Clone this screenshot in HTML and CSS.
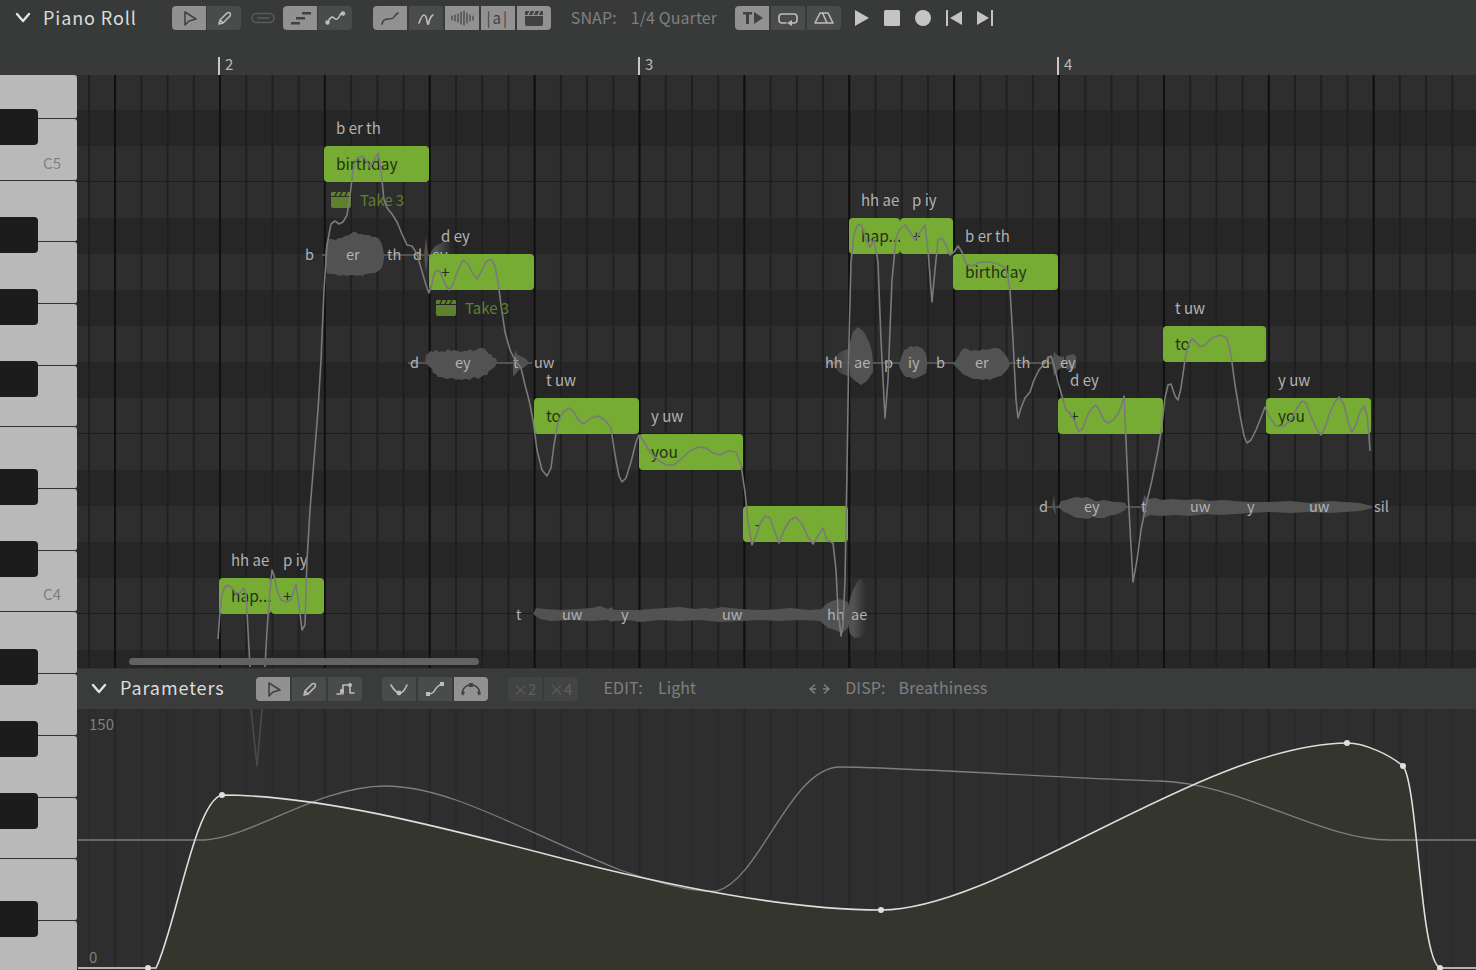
FILE: index.html
```html
<!DOCTYPE html>
<html>
<head>
  <meta charset="UTF-8">
  <title>Piano Roll</title>
  <link rel="stylesheet" href="styles.css">
</head>
<body>
  <div class="topbar">
    <div class="toolbar">
      <svg class="chevron" width="16" height="12" viewBox="0 0 16 12"><path d="M2 2l6 7 6-7"/></svg>
      <span class="panel-title">Piano Roll</span>

      <div class="group tight g-edit">
        <button class="btn on"><svg viewBox="0 0 34 24"><path class="st" d="M13 6v13l4-4 7-2z"/></svg></button>
        <button class="btn"><svg viewBox="0 0 34 24"><path class="st" d="M12 18l1-4 7-7q2-1 3 0t0 3l-7 7zM13 14l3 3"/></svg></button>
      </div>
      <svg class="link-icon" width="24" height="12" viewBox="0 0 24 12"><rect x="1" y="1.500" width="22" height="9" rx="4.500"/><path d="M6 6h12"/></svg>
      <div class="group tight g-view">
        <button class="btn on"><svg viewBox="0 0 34 24"><path class="fl" d="M8 16h9v2.500H8zM13 11h9v2.500h-9zM19 6h9v2.500h-9z"/></svg></button>
        <button class="btn"><svg viewBox="0 0 34 24"><path class="st" d="M10 16q3-7 6-4t5-1 3-4"/><circle class="fl" cx="9.500" cy="16.500" r="2.200"/><circle class="fl" cx="25" cy="7.500" r="2.200"/></svg></button>
      </div>
      <div class="group g-show">
        <button class="btn on"><svg viewBox="0 0 34 24"><path class="st" d="M9 18q1-5 6-5t6-2 4-4"/></svg></button>
        <button class="btn"><svg viewBox="0 0 34 24"><path class="st" d="M10 17q3-8 5-8t3 6 2 1 4-7"/></svg></button>
        <button class="btn on"><svg viewBox="0 0 34 24"><path class="st thin" d="M7 10v4M10 9v6M13 8v8M16 6v12M19 5v14M22 7v10M25 9v6M28 10v4"/></svg></button>
        <button class="btn on btn-text">|a|</button>
        <button class="btn on"><svg viewBox="0 0 34 24"><path class="fl" d="M8 10h18v8q0 2-2 2H10q-2 0-2-2zM8 9V6q0-1 1-1h16q1 0 1 1v3z"/><path class="cut" d="M11 9l2-4M16 9l2-4M21 9l2-4"/></svg></button>
      </div>

      <span class="hint hint-snap">SNAP:</span>
      <span class="hint hint-value">1/4 Quarter</span>

      <div class="group g-play">
        <button class="btn on"><svg viewBox="0 0 34 24"><path class="fl" d="M8 6h9v2.500h-3V18h-3V8.500H8zM19 6l9 6-9 6z"/></svg></button>
        <button class="btn"><svg viewBox="0 0 34 24"><path class="st" d="M15 17h-4q-3 0-3-3v-3q0-3 3-3h12q3 0 3 3v3q0 3-3 3h-2"/><path class="fl" d="M21 14v6l-5-3z"/></svg></button>
        <button class="btn"><svg viewBox="0 0 34 24"><path class="st" d="M13 7h8l5 10H8zM16 8l4 9"/></svg></button>
      </div>

      <div class="transport">
        <svg width="14" height="16" viewBox="0 0 14 16"><path d="M0 0l14 8-14 8z"/></svg>
        <svg width="16" height="16" viewBox="0 0 16 16"><rect width="16" height="16" rx="1.500"/></svg>
        <svg width="16" height="16" viewBox="0 0 16 16"><circle cx="8" cy="8" r="8"/></svg>
        <svg width="16" height="16" viewBox="0 0 16 16"><path d="M0 0h2v16H0zM16 1v14L4 8z"/></svg>
        <svg width="16" height="16" viewBox="0 0 16 16"><path d="M14 0h2v16h-2zM0 1v14l12-7z"/></svg>
      </div>
    </div>
    <div class="ruler">
      <span class="bar-mark mark-2">2</span>
      <span class="bar-mark mark-3">3</span>
      <span class="bar-mark mark-4">4</span>
    </div>
  </div>

  <div class="main">
    <div class="piano">
      <div class="white-keys">
        <div class="key first"></div>
        <div class="key">C5</div>
        <div class="key"></div>
        <div class="key"></div>
        <div class="key"></div>
        <div class="key"></div>
        <div class="key"></div>
        <div class="key"></div>
        <div class="key">C4</div>
        <div class="key"></div>
        <div class="key"></div>
        <div class="key"></div>
        <div class="key"></div>
        <div class="key"></div>
        <div class="key"></div>
        <div class="key"></div>
      </div>
      <div class="black-keys">
        <div class="black"></div>
        <div class="black wide"></div>
        <div class="black"></div>
        <div class="black"></div>
        <div class="black wide"></div>
        <div class="black"></div>
        <div class="black wide"></div>
        <div class="black"></div>
        <div class="black"></div>
        <div class="black wide"></div>
      </div>
    </div>

    <div class="editor">
      <div class="roll">
        <!-- waveforms and phonemes sit under the notes -->
        <svg class="layer" viewBox="77 75 1399 593">
          <defs>
            <linearGradient id="fade-in"><stop offset="0" stop-color="#525252" stop-opacity="0"/><stop offset="1" stop-color="#525252"/></linearGradient>
            <linearGradient id="fade-out"><stop offset="0.300" stop-color="#525252"/><stop offset="1" stop-color="#525252" stop-opacity="0"/></linearGradient>
          </defs>
          <g class="wave">
            <path d="M322 254h110v2H322z"/>
            <path d="M325 255L326 245 328 239 332 239 335 240 339 238 342 238 345 236 349 235 353 232 356 232 358 234 362 234 364 235 369 235 372 237 376 237 379 239 381 242 382 245 383 249 384 255 384 259 383 264 381 269 378 271 375 273 371 273 368 274 365 274 363 276 360 275 356 276 354 275 350 275 347 276 343 275 340 276 337 275 334 274 330 274 327 273 326 268 325 262z"/>
            <path d="M424 255l2-18 2 18-2 18z"/>
            <path fill="url(#fade-out)" d="M430 255q3-12 22-15v30q-18-2-22-15z"/>

            <path d="M408 362h124v2H408z"/>
            <path d="M425 363L426 355 428 354 430 351 433 352 436 350 439 352 442 351 445 352 448 349 451 351 454 350 458 351 461 352 464 351 467 351 470 349 473 351 476 350 479 348 482 348 485 349 487 352 489 354 492 355 493 358 496 358 497 361 496 365 494 368 492 369 489 371 487 375 484 375 481 377 478 379 475 377 472 378 470 380 467 379 464 379 462 380 459 379 456 380 453 378 450 378 447 379 444 378 441 377 438 377 436 374 433 373 432 369z"/>
            <path d="M513 363l2-13 2 4 3 2 3 1 3 2 3 4-3 3-3 2-3 1-3 3-2 3-2 1z"/>

            <path d="M533 614L536 608 545 609 560 610 578 609 592 608 600 606 608 609 612 607 614 610 640 610 650 609 665 608 680 607 695 609 705 608 712 609 722 607 740 609 760 610 780 609 790 608 810 610 822 609 826 604 832 601 840 599 848 602 848 628 842 633 835 630 828 628 820 621 800 620 780 621 760 620 740 621 720 622 700 620 680 621 660 620 640 622 628 620 614 621 612 622 608 620 590 621 570 620 550 621 540 619z"/>
            <path fill="url(#fade-out)" d="M848 606L852 592 857 582 862 578 866 590 866 630 861 637 855 638 850 634 848 624z"/>

            <path d="M826 362h250v2H826z"/>
            <path fill="url(#fade-in)" d="M824 363l10-5 6-6 8-3v27l-8-3-6-6z"/>
            <path d="M849 345l4-13 5-5 6 5 5 10 3 10 1 10 0 10-6 9-6 4-7-5-4-4z"/>
            <path d="M900 362l2-7 2-5 3-1 3-3 4 1 3-1 4 2 2 1 3 5 1 6 0 6-1 7-3 2-4 2-3 1-3 1-3-2-4 0-3-3-2-4-2-4z"/>
            <path d="M953 364l3-4 2-3 3-6 3-3 4 1 3 2 4-1 4 1 4-2 3 1 4-1 4-1 4 0 3 2 3 3 3 4 2 4 1 4-3 5-3 3-3 3-4 1-3 1-4 2-4-1-4 1-4-1-4 0-3-1-4-2-4-2-3-3z"/>
            <path d="M1052 363l2-12 2 3 3 2 3 1 2-1v12l-3 0-3 2-2 3-2 3zM1066 356l7-2 3 2v12l-6 2-4-1z"/>

            <path d="M1047 506h325v2H1047z"/>
            <path d="M1052 507l2-12 2 20zM1058 507l3-6 5-1 6-2 5-1 5 1 5-1 4 2 4 2 4 0 5-1 5 1 6 1 4 0 6 1 2 3-2 4-5 3-6 2-6 1-4 2-7 0-4-1-6 2-5-1-5 0-5-2-3-2-5-2z"/>
            <path d="M1142 507L1144 495 1148 499 1155 498 1162 500 1172 499 1185 500 1198 499 1210 501 1222 500 1235 501 1250 502 1270 502 1290 501 1310 503 1330 501 1345 502 1360 503 1372 506 1372 508 1360 511 1345 512 1330 513 1310 512 1290 513 1270 512 1250 513 1235 514 1220 515 1205 514 1190 516 1175 515 1160 516 1150 515 1145 518 1142 510z"/>
          </g>
          <g class="phones">
            <text x="305" y="260">b</text><text x="346" y="260">er</text><text x="387" y="260">th</text><text x="413" y="260">d</text><text x="432" y="260">ey</text>
            <text x="410" y="368">d</text><text x="455" y="368">ey</text><text x="513" y="368">t</text><text x="534" y="368">uw</text>
            <text x="516" y="620">t</text><text x="562" y="620">uw</text><text x="621" y="620">y</text><text x="722" y="620">uw</text><text x="827" y="620">hh</text><text x="851" y="620">ae</text>
            <text x="825" y="368">hh</text><text x="854" y="368">ae</text><text x="884" y="368">p</text><text x="908" y="368">iy</text><text x="936" y="368">b</text><text x="975" y="368">er</text><text x="1016" y="368">th</text><text x="1041" y="368">d</text><text x="1060" y="368">ey</text>
            <text x="1039" y="512">d</text><text x="1084" y="512">ey</text><text x="1141" y="512">t</text><text x="1190" y="512">uw</text><text x="1247" y="512">y</text><text x="1309" y="512">uw</text><text x="1374" y="512">sil</text>
          </g>
        </svg>

        <!-- left/top/width come from each note's time and pitch -->
        <div class="note" style="left:142px;top:503px;width:52px"><span class="phon">hh ae</span><span class="lyric">hap...</span></div>
        <div class="note" style="left:194px;top:503px;width:53px"><span class="phon">p iy</span><span class="lyric">+</span></div>
        <div class="note" style="left:247px;top:71px;width:105px"><span class="phon">b er th</span><span class="lyric">birthday</span>
          <div class="take"><svg width="20" height="17" viewBox="0 0 20 17"><path d="M0 6h20v9q0 2-2 2H2q-2 0-2-2zM0 5V2q0-1 1-1h18q1 0 1 1v3z"/><path class="cut" d="M4 5l2-4M9 5l2-4M14 5l2-4"/></svg><span>Take 3</span></div>
        </div>
        <div class="note" style="left:352px;top:179px;width:105px"><span class="phon">d ey</span><span class="lyric">+</span>
          <div class="take"><svg width="20" height="17" viewBox="0 0 20 17"><path d="M0 6h20v9q0 2-2 2H2q-2 0-2-2zM0 5V2q0-1 1-1h18q1 0 1 1v3z"/><path class="cut" d="M4 5l2-4M9 5l2-4M14 5l2-4"/></svg><span>Take 3</span></div>
        </div>
        <div class="note" style="left:457px;top:323px;width:105px"><span class="phon">t uw</span><span class="lyric">to</span></div>
        <div class="note" style="left:562px;top:359px;width:104px"><span class="phon">y uw</span><span class="lyric">you</span></div>
        <div class="note" style="left:666px;top:431px;width:105px"><span class="lyric">-</span></div>
        <div class="note" style="left:772px;top:143px;width:51px"><span class="phon">hh ae</span><span class="lyric">hap...</span></div>
        <div class="note" style="left:823px;top:143px;width:53px"><span class="phon">p iy</span><span class="lyric">+</span></div>
        <div class="note" style="left:876px;top:179px;width:105px"><span class="phon">b er th</span><span class="lyric">birthday</span></div>
        <div class="note" style="left:981px;top:323px;width:105px"><span class="phon">d ey</span><span class="lyric">+</span></div>
        <div class="note" style="left:1086px;top:251px;width:103px"><span class="phon">t uw</span><span class="lyric">to</span></div>
        <div class="note" style="left:1189px;top:323px;width:105px"><span class="phon">y uw</span><span class="lyric">you</span></div>

        <!-- pitch curve goes over everything -->
        <svg class="layer" viewBox="77 75 1399 593">
          <path class="pitch" d="M218 639L220 612 222 594 225 587 228 585 232 588 236 593 240 593 244 588 246 594 248 630 250 667"/>
          <path class="pitch" d="M265 667L267 630 270 590 272 570 274 575 277 590 281 600 286 602 291 600 296 584 299 605 302 630 305 625 307 560 310 510 314 460 318 410 321 360 324 290 327 245 331 224 335 221 339 224 343 222 347 215 350 196 353 170 357 158 362 156 366 160 370 167 374 160 378 153 381 170 384 200 387 208 392 214 397 222 402 234 407 245 412 246 417 254 421 268 426 285 429 293 432 284 434 274 437 270 440 272 444 282 449 290 453 284 458 270 463 260 468 264 473 274 477 279 481 272 486 262 491 259 495 266 498 282 501 305 505 332 510 350 515 360 521 368 525 385 529 400 533 420 537 450 542 470 547 476 551 468 554 445 558 422 563 412 569 408 574 412 578 420 584 424 591 418 598 416 605 420 611 428 615 455 619 476 622 482 626 478 631 462 636 442 639 435 644 442 650 452 658 460 666 465 674 465 682 458 690 451 698 447 706 448 713 453 720 455 728 451 736 452 741 465 745 492 748 522 752 545 756 536 760 524 765 516 770 518 775 532 779 543 784 530 790 520 796 517 802 524 808 537 813 544 818 536 823 528 827 540 833 543 836 570 838 610 841 636 843 625 845 580 847 470 849 340 851 262 854 234 858 224 862 226 866 240 870 247 874 240 878 262 881 340 885 418 888 380 892 280 896 238 900 229 905 225 910 232 915 240 920 232 925 225 928 250 932 302 935 270 938 240 942 238 946 245 950 255 954 252 958 246 962 252 966 264 972 266 980 262 990 262 998 264 1006 268 1010 290 1013 340 1016 400 1018 418 1021 408 1025 398 1030 392 1034 380 1039 370 1044 364 1048 358 1051 356 1054 366 1058 382 1062 396 1066 410 1070 413 1074 420 1079 432 1083 428 1088 414 1093 407 1096 405 1100 412 1104 420 1108 423 1113 420 1118 414 1122 404 1124 396 1126 440 1129 510 1133 582 1137 560 1141 530 1146 505 1152 480 1158 450 1162 425 1165 398 1168 385 1171 384 1175 396 1178 400 1181 388 1185 360 1188 345 1192 339 1196 342 1200 347 1205 345 1212 338 1220 335 1227 338 1231 355 1235 385 1240 415 1244 436 1247 443 1251 440 1256 430 1262 415 1265 407 1270 418 1276 426 1284 426 1291 420 1297 408 1302 401 1306 403 1310 414 1316 428 1321 435 1325 428 1330 412 1335 402 1339 397 1344 405 1349 425 1352 432 1356 425 1360 412 1364 406 1367 415 1369 435 1370 451"/>
        </svg>
        <div class="scrollbar"></div>
      </div>

      <div class="params-bar">
        <svg class="chevron" width="16" height="12" viewBox="0 0 16 12"><path d="M2 2l6 7 6-7"/></svg>
        <span class="panel-title">Parameters</span>

        <div class="group g-ptool">
          <button class="btn on"><svg viewBox="0 0 34 24"><path class="st" d="M13 6v13l4-4 7-2z"/></svg></button>
          <button class="btn"><svg viewBox="0 0 34 24"><path class="st" d="M12 18l1-4 7-7q2-1 3 0t0 3l-7 7zM13 14l3 3"/></svg></button>
          <button class="btn"><svg viewBox="0 0 34 24"><path class="st" d="M9 17h4v-4h2v4M15 13V8h7v8h4"/><circle class="fl" cx="14" cy="14" r="2"/><circle class="fl" cx="22" cy="8" r="2"/></svg></button>
        </div>
        <div class="group g-pcurve">
          <button class="btn"><svg viewBox="0 0 34 24"><path class="st" d="M9 8q4 7 8 8t8-8"/><circle class="fl" cx="17" cy="16" r="2.400"/></svg></button>
          <button class="btn"><svg viewBox="0 0 34 24"><path class="st" d="M10 17q5 0 7-4t7-6"/><rect class="fl" x="8" y="15" width="4" height="4"/><rect class="fl" x="22" y="5" width="4" height="4"/></svg></button>
          <button class="btn on"><svg viewBox="0 0 34 24"><path class="st" d="M8 17q1-9 9-9t9 9"/><path class="fl" d="M8 14l3 1-2 4zM26 14l-3 1 2 4zM15 6h4v4h-4z"/></svg></button>
        </div>
        <div class="group g-zoom">
          <button class="btn dim">×2</button>
          <button class="btn dim">×4</button>
        </div>

        <span class="hint hint-edit">EDIT:</span>
        <span class="hint hint-light">Light</span>
        <svg class="swap" width="23" height="12" viewBox="0 0 23 12"><path d="M7 1.500L2 6l5 4.500M2 6h6M16 1.500L21 6l-5 4.500M21 6h-6"/></svg>
        <span class="hint hint-disp">DISP:</span>
        <span class="hint hint-breath">Breathiness</span>
      </div>

      <div class="params">
        <span class="axis axis-top">150</span>
        <span class="axis axis-bottom">0</span>
        <svg class="layer" viewBox="77 709 1399 261">
          <path class="param-fill" d="M148 970L156 968C175 930 195 800 222 795C330 795 470 835 600 868C700 892 800 910 881 910C1000 910 1200 745 1347 743C1365 743 1390 755 1403 766C1418 785 1420 960 1440 968L1440 970Z"/>
          <path class="pitch faint" d="M251 709L257 766 262 709"/>
          <path class="param-ghost" d="M78 840L205 840C250 838 320 786 385 786C450 786 520 830 620 870C680 890 700 892 717 891C760 880 790 767 840 767C900 767 1100 780 1160 781C1240 783 1320 840 1390 840L1476 840"/>
          <path class="param-line" d="M78 968L156 968C175 930 195 800 222 795C330 795 470 835 600 868C700 892 800 910 881 910C1000 910 1200 745 1347 743C1365 743 1390 755 1403 766C1418 785 1420 960 1440 968L1476 968"/>
          <g class="param-dots">
            <circle cx="148" cy="968" r="3"/><circle cx="222" cy="795" r="3"/><circle cx="881" cy="910" r="3"/><circle cx="1347" cy="743" r="3"/><circle cx="1403" cy="766" r="3"/><circle cx="1440" cy="968" r="3"/>
          </g>
        </svg>
      </div>
    </div>
  </div>
</body>
</html>
```

FILE: styles.css
```css
* {
  box-sizing: border-box;
}
html, body {
  margin: 0;
  height: 100%;
  overflow: hidden;
}
body {
  background: #383a39;
  color: #808080;
  font-family: "Noto Sans CJK SC", "Noto Sans", sans-serif;
  font-size: 15px;
}

/* top bar */
.topbar {
  height: 75px;
  display: flex;
  flex-direction: column;
}
.toolbar {
  height: 36px;
  padding-left: 15px;
  display: flex;
  align-items: center;
}
.toolbar > * {
  flex: none;
}
.chevron {
  fill: none;
  stroke: #e4e4e4;
  stroke-width: 2.4;
  stroke-linecap: round;
  stroke-linejoin: round;
}
.panel-title {
  margin: 0 0 2px 12px;
  color: #dcdcdc;
  font-size: 18px;
  letter-spacing: 0.9px;
}
.group {
  display: flex;
  gap: 2px;
  height: 24px;
  flex: none;
}
.group.tight {
  gap: 1px;
}
.btn {
  width: 34px;
  height: 24px;
  padding: 0;
  border: none;
  background: #4a4b4b;
  color: #bdbdbd;
  font-family: inherit;
  font-size: 15px;
  line-height: 24px;
}
.btn:first-child {
  border-radius: 4px 0 0 4px;
}
.btn:last-child {
  border-radius: 0 4px 4px 0;
}
.btn svg {
  display: block;
  width: 34px;
  height: 24px;
}
.btn .st {
  fill: none;
  stroke: currentColor;
  stroke-width: 1.6;
  stroke-linejoin: round;
  stroke-linecap: round;
}
.btn .thin {
  stroke-width: 1.2;
}
.btn .fl {
  fill: currentColor;
}
.btn .cut {
  fill: none;
  stroke: #919191;
  stroke-width: 1.5;
}
.btn.on {
  background: #919191;
  color: #414141;
}
.btn-text {
  letter-spacing: 2px;
}
.btn.dim {
  background: #424343;
  color: #5f5f5f;
}
.link-icon {
  margin-left: 10px;
  fill: none;
  stroke: #595b5b;
  stroke-width: 1.6;
}
.g-edit { margin-left: 35px; }
.g-view { margin-left: 8px; }
.g-show { margin-left: 21px; }
.g-play { margin-left: 18px; }
.hint {
  color: #808080;
  font-size: 16px;
  letter-spacing: 0.1px;
  margin-bottom: 2px;
}
.hint-snap { margin-left: 20px; }
.hint-value { margin-left: 14px; }
.transport {
  margin-left: 14px;
  display: flex;
  gap: 15px;
  align-items: center;
  fill: #c4c4c4;
}

.ruler {
  position: relative;
  flex: 1;
}
.bar-mark {
  position: absolute;
  top: 21px;
  height: 18px;
  border-left: 2px solid #c9c9c9;
  padding-left: 5px;
  color: #b8b8b8;
  font-size: 15px;
  line-height: 14px;
}
.mark-2 { left: 218px; }
.mark-3 { left: 638px; }
.mark-4 { left: 1057px; }

/* main area */
.main {
  display: flex;
  height: 895px;
}
.piano {
  position: relative;
  width: 77px;
  flex: none;
  background: #333;
  overflow: hidden;
}
.white-keys {
  display: flex;
  flex-direction: column;
}
.key {
  height: 61.710px;
  flex: none;
  background: #b9b9b9;
  border-radius: 0 3px 3px 0;
  border-bottom: 1.500px solid #333;
  display: flex;
  align-items: flex-end;
  justify-content: flex-end;
  padding: 0 16px 7px 0;
  color: #808080;
  font-size: 15px;
}
.key.first {
  height: 43.800px;
}
.black-keys {
  position: absolute;
  top: 34px;
  left: 0;
  display: flex;
  flex-direction: column;
  gap: 36px;
}
.black {
  width: 38px;
  height: 36px;
  background: #1c1c1c;
  border-radius: 0 4px 4px 0;
}
.black.wide {
  margin-top: 36px;
}

.editor {
  flex: 1;
  min-width: 0;
  display: flex;
  flex-direction: column;
}
.roll {
  position: relative;
  height: 593px;
  overflow: hidden;
  background-color: #2e2e2e;
  background-image:
    linear-gradient(to right, #0f0f0f 2px, transparent 2px),
    linear-gradient(to right, #1f1f1f 2px, transparent 2px),
    linear-gradient(to bottom, transparent 71px, #1c1c1c 71px, #1c1c1c 72.500px, transparent 72.500px, transparent 323px, #1c1c1c 323px, #1c1c1c 324.500px, transparent 324.500px),
    linear-gradient(to bottom, #262626 36px, transparent 36px, transparent 108px, #262626 108px, #262626 144px, transparent 144px, transparent 180px, #262626 180px, #262626 216px, transparent 216px, transparent 252px, #262626 252px, #262626 288px, transparent 288px, transparent 360px, #262626 360px, #262626 396px, transparent 396px);
  background-size: 104.900px 100%, 26.225px 100%, 100% 432px, 100% 432px;
  background-position: 37px 0, 11px 0, 0 35px, 0 35px;
}
.layer {
  position: absolute;
  inset: 0;
  width: 100%;
  height: 100%;
  display: block;
}
.wave {
  fill: #525252;
}
.phones text {
  fill: #b2b2b2;
  font-size: 14.500px;
}
.note {
  position: absolute;
  height: 36px;
  background: #76ab34;
  border-radius: 4px;
  padding-left: 12px;
  color: #263117;
  font-size: 15.500px;
  line-height: 35px;
  white-space: nowrap;
}
.phon {
  position: absolute;
  left: 12px;
  top: -30px;
  height: 24px;
  line-height: 24px;
  color: #b2b2b2;
  font-size: 15px;
}
.lyric {
  display: block;
}
.take {
  position: absolute;
  left: 7px;
  top: 45px;
  display: flex;
  align-items: center;
  gap: 9px;
  color: #5f802c;
  font-size: 15px;
  line-height: 17px;
}
.take svg {
  fill: #5f802c;
  display: block;
}
.take .cut {
  fill: none;
  stroke: #2b2b2b;
  stroke-width: 1.500;
}
.pitch {
  fill: none;
  stroke: #7a7a7a;
  stroke-width: 1.600;
  stroke-linejoin: round;
}
.pitch.faint {
  stroke: #4a4a4a;
}
.scrollbar {
  position: absolute;
  left: 52px;
  top: 583px;
  width: 350px;
  height: 7px;
  background: #636363;
  border-radius: 4px;
}

/* parameters */
.params-bar {
  height: 41px;
  padding-left: 14px;
  display: flex;
  align-items: center;
  background: #3a3c3b;
  border-top: 1px solid #333;
}
.params-bar > * {
  flex: none;
}
.params-bar .panel-title, .params-bar .hint {
  margin-bottom: 4px;
}
.params-bar .panel-title { margin-left: 13px; }
.g-ptool { margin-left: 31px; }
.g-pcurve { margin-left: 20px; }
.g-zoom { margin-left: 20px; }
.hint-edit { margin-left: 26px; }
.hint-light { margin-left: 15px; }
.swap {
  margin-left: 112px;
  fill: none;
  stroke: #808080;
  stroke-width: 1.400;
}
.hint-disp { margin-left: 14px; }
.hint-breath { margin-left: 13px; }
.params {
  position: relative;
  flex: 1;
  overflow: hidden;
  background-color: #2e2e2e;
  background-image:
    linear-gradient(to right, #272727 2px, transparent 2px),
    linear-gradient(to right, #2a2a2a 2px, transparent 2px);
  background-size: 104.900px 100%, 26.225px 100%;
  background-position: 37px 0, 11px 0;
}
.axis {
  position: absolute;
  left: 12px;
  color: #808080;
  font-size: 15px;
  line-height: 20px;
}
.axis-top { top: 5px; }
.axis-bottom { top: 238px; }
.param-fill {
  fill: #34362e;
}
.param-ghost {
  fill: none;
  stroke: #7e7e7e;
  stroke-width: 1.300;
}
.param-line {
  fill: none;
  stroke: #dedede;
  stroke-width: 1.600;
}
.param-dots circle {
  fill: #dedede;
}
```
